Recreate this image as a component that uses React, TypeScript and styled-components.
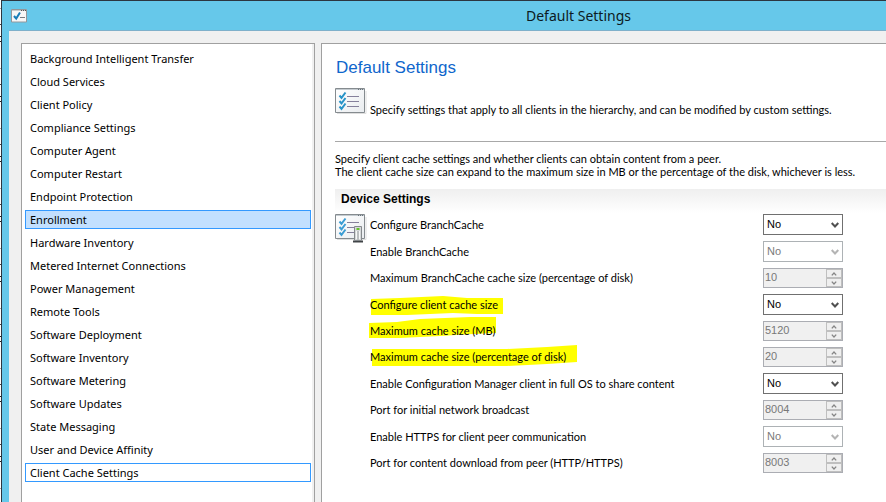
import React from "react";
import styled, { createGlobalStyle } from "styled-components";

const GlobalStyle = createGlobalStyle`
  *, *::before, *::after { box-sizing: border-box; }
  body { margin: 0; background: #fff; overflow: hidden; }
  button, input, select { font: inherit; }
`;

const Backdrop = styled.div`
  min-height: 100vh;
  display: flex;
  padding-left: 1px;
  background: repeating-linear-gradient(#fff 0 8px, #aaa 8px 9px, #fff 9px 24px, #444 24px 25px, #fff 25px 36px, #222 36px 37px, #fff 37px 41px, #222 41px 42px, #fff 42px 60px);
`;

const Window = styled.div`
  flex: 1;
  min-width: 0;
  display: flex;
  flex-direction: column;
  border: solid #2c3640;
  border-width: 1px 0 0 1px;
  padding-left: 7px;
  background: #66c8ea;
  color: #000;
`;

const TitleBar = styled.header`
  height: 30px;
  display: flex;
  align-items: center;
  padding-left: 2px;
  border-bottom: 1px solid #7fb0ca;
`;

const TitleText = styled.h1`
  flex: 1;
  margin: 0;
  padding-left: 244px;
  text-align: center;
  font: 400 14px/20px "Noto Sans", sans-serif;
  color: #0c1a22;
`;

const Content = styled.div`
  flex: 1;
  display: flex;
  gap: 6px;
  padding: 12px 0 0 12px;
  background: #f0f0f0;
`;

const CategoryList = styled.nav`
  flex: 0 0 294px;
  display: flex;
  flex-direction: column;
  gap: 4px;
  padding: 5px 1px 18px 3px;
  border: solid #a0a0a0;
  border-width: 1px 1px 0 1px;
  background: linear-gradient(#f0f0f0, #f0f0f0) right / 2px 100% no-repeat #fff;
`;

const Category = styled.button<{ $state?: "selected" | "focused" }>`
  height: 19px;
  margin-right: 2px;
  padding: 0 4px;
  border: 1px solid ${(p) => (p.$state ? "#3399ff" : "transparent")};
  background: ${(p) => (p.$state === "selected" ? "#c2e0ff" : "transparent")};
  color: #000;
  font: 400 11px/17px "Noto Sans", sans-serif;
  text-align: left;
`;

const Panel = styled.main`
  flex: 1;
  min-width: 0;
  padding: 14px 0 0 13px;
  border: solid #a0a0a0;
  border-width: 1px 0 0 1px;
  background: #fff;
  font: 400 11px/13px Lato, "Liberation Sans", sans-serif;
`;

const Heading = styled.h2`
  margin: 0 0 10px;
  padding-left: 1px;
  font-family: "Liberation Sans", Arial, sans-serif;
  font-size: 17px;
  line-height: 20px;
  font-weight: 400;
  color: #0f66cc;
`;

const Intro = styled.div`
  display: flex;
  gap: 3px;
  height: 54px;
  border-bottom: 1px solid #a8a8a8;
`;

const Paragraph = styled.p<{ $top: number }>`
  margin: ${(p) => p.$top}px 0 0;
  white-space: nowrap;
`;

const SectionTitle = styled.h3`
  height: 24px;
  margin: 11px 0 0;
  padding-left: 6px;
  background: linear-gradient(#efefef, #fff);
  font-family: "Liberation Sans", Arial, sans-serif;
  font-size: 12px;
  line-height: 21px;
`;

const Section = styled.section`
  display: flex;
  gap: 3px;
  padding: 1px 43px 24px 0;
`;

const Fields = styled.div`
  flex: 1;
  display: flex;
  flex-direction: column;
  gap: 6px;
`;

const Field = styled.div`
  display: flex;
  align-items: center;
  justify-content: space-between;
`;

const Label = styled.label`
  position: relative;
  isolation: isolate;
  line-height: 20px;
`;

const Marker = styled.svg`
  position: absolute;
  z-index: -1;
  left: 0;
  top: 0;
  width: 210px;
  height: 20px;
  overflow: visible;
  fill: #ff0;
`;

const SelectBox = styled.div`
  width: 80px;
  height: 21px;
  display: grid;
  align-items: center;
  font-family: "Liberation Sans", Arial, sans-serif;

  > * { grid-area: 1 / 1; }
  > svg { justify-self: end; margin-right: 4px; pointer-events: none; }
`;

const Select = styled.select`
  appearance: none;
  width: 100%;
  height: 21px;
  padding: 0 3px;
  border: 1px solid #707070;
  border-radius: 0;
  background: #fff;
  color: #000;

  &:disabled { border-color: #adb2b5; color: #7a7a7a; opacity: 1; }
`;

const SpinBox = styled.div`
  display: flex;
  width: 80px;
  height: 20px;
  border: 1px solid #abadb3;
  background: #f0f0f0;
  font-family: "Liberation Sans", Arial, sans-serif;
`;

const SpinInput = styled.input`
  appearance: textfield;
  flex: 1;
  min-width: 0;
  height: 16px;
  padding: 0 1px;
  border: 0;
  background: transparent;
  color: #787878;

  &::-webkit-inner-spin-button { appearance: none; }
`;

const SpinButtons = styled.div`
  display: grid;
  width: 16px;
`;

const SpinButton = styled.button`
  display: grid;
  place-items: center;
  padding: 0;
  border: 1px solid #bfbfbf;
  background: #efefef;
`;

const Chevron = ({ up, color, bold }: { up?: boolean; color: string; bold?: boolean }) => (
  <svg width={bold ? 8 : 6} height={bold ? 6 : 4} viewBox="0 0 8 6" fill="none" stroke={color} strokeWidth="2">
    <path d={up ? "M.7 5 4 1.5 7.3 5" : "M.7 1 4 4.5 7.3 1"} />
  </svg>
);

const TitleIcon = () => (
  <svg width="16" height="14" viewBox="0 0 16 14" fill="none">
    <path d="M.5.5h15v12.5H.5z" fill="#f7f7f7" stroke="#92979b" />
    <path d="M1 1.5h14" stroke="#c9cccd" />
    <path d="M10 1.5h1m1 0h1m1 0h1" stroke="#555" />
    <path d="m3 7 2.2 2.5L9 3.5" stroke="#187db8" strokeWidth="2" />
    <path d="M9 8.5h5" stroke="#777b80" />
  </svg>
);

const ChecklistIcon = ({ device }: { device?: boolean }) => (
  <svg width="32" height="30" viewBox="0 0 32 30" fill="none">
    <defs>
      <linearGradient id="sheet" x2="1" y2="1">
        <stop stopColor="#fff" />
        <stop offset="1" stopColor="#e9ecef" />
      </linearGradient>
    </defs>
    <path d="M2 25.5h29V3" stroke="#dedede" />
    <path d="M.5.5h29v24H.5z" fill="url(#sheet)" stroke="#858b8f" />
    <path d="M1 1.5h28" stroke="#c4cbd0" />
    <path d="M23 1.5h1m1 0h1m1 0h1" stroke="#69737b" />
    <g stroke={device ? "#3c9dd4" : "#2793c8"} strokeWidth="2">
      <path d="m4.5 7.5 2 2.3 4-5.3M4.5 13l2 2.3 4-5.3M4.5 18.5l2 2.3 4-5.3" />
    </g>
    <path d="M12 8.5h12M12 13.5h12M12 18.5h12" stroke="#85809b" />
    {device && (
      <>
        <path d="M18 27.5h10" stroke="#404447" strokeWidth="2" />
        <path d="M19.5 12.5h7v14h-7z" fill="#d6d9da" stroke="#85898c" />
        <path d="M21.5 17v8m3-8v8" stroke="#f7f8f8" />
        <path d="M23 17v9" stroke="#a0a4a6" />
        <path d="M21.5 15h3" stroke="#65c32b" strokeWidth="2" />
      </>
    )}
  </svg>
);

const categories = [
  "Background Intelligent Transfer", "Cloud Services", "Client Policy", "Compliance Settings",
  "Computer Agent", "Computer Restart", "Endpoint Protection", "Enrollment", "Hardware Inventory",
  "Metered Internet Connections", "Power Management", "Remote Tools", "Software Deployment",
  "Software Inventory", "Software Metering", "Software Updates", "State Messaging",
  "User and Device Affinity", "Client Cache Settings",
];

type Setting = { label: string; value: string; kind: "select" | "number"; disabled?: boolean; marker?: string };

const settings: Setting[] = [
  { label: "Configure BranchCache", value: "No", kind: "select" },
  { label: "Enable BranchCache", value: "No", kind: "select", disabled: true },
  { label: "Maximum BranchCache cache size (percentage of disk)", value: "10", kind: "number" },
  { label: "Configure client cache size", value: "No", kind: "select", marker: "1,4 30,3 73,1 97,3 133,3 133,19 107,19 83,18 37,20 1,20" },
  { label: "Maximum cache size (MB)", value: "5120", kind: "number", marker: "-1,2 27,1 50,-2 100,-4 126,-4 126,12 103,13 70,15 30,17 -1,17" },
  { label: "Maximum cache size (percentage of disk)", value: "20", kind: "number", marker: "2,2 137,2 177,0 207,-2 207,15 177,17 137,19 2,19" },
  { label: "Enable Configuration Manager client in full OS to share content", value: "No", kind: "select" },
  { label: "Port for initial network broadcast", value: "8004", kind: "number" },
  { label: "Enable HTTPS for client peer communication", value: "No", kind: "select", disabled: true },
  { label: "Port for content download from peer (HTTP/HTTPS)", value: "8003", kind: "number" },
];

const SettingRow = ({ setting, id }: { setting: Setting; id: string }) => (
  <Field>
    <Label htmlFor={id}>
      {setting.marker && <Marker aria-hidden="true"><polygon points={setting.marker} /></Marker>}
      {setting.label}
    </Label>
    {setting.kind === "select" ? (
      <SelectBox>
        <Select id={id} defaultValue={setting.value} disabled={setting.disabled}>
          <option>No</option>
          <option>Yes</option>
        </Select>
        <Chevron bold color={setting.disabled ? "#b4b4b4" : "#505050"} />
      </SelectBox>
    ) : (
      <SpinBox>
        <SpinInput id={id} type="number" defaultValue={setting.value} disabled />
        <SpinButtons>
          <SpinButton type="button" aria-label="Increase" disabled><Chevron up color="#858585" /></SpinButton>
          <SpinButton type="button" aria-label="Decrease" disabled><Chevron color="#858585" /></SpinButton>
        </SpinButtons>
      </SpinBox>
    )}
  </Field>
);

export default function App() {
  return (
    <>
      <GlobalStyle />
      <Backdrop>
        <Window>
          <TitleBar>
            <TitleIcon />
            <TitleText>Default Settings</TitleText>
          </TitleBar>
          <Content>
            <CategoryList aria-label="Settings categories">
              {categories.map((name) => (
                <Category
                  key={name}
                  type="button"
                  $state={name === "Enrollment" ? "selected" : name === "Client Cache Settings" ? "focused" : undefined}
                >
                  {name}
                </Category>
              ))}
            </CategoryList>
            <Panel>
              <Heading>Default Settings</Heading>
              <Intro>
                <ChecklistIcon />
                <Paragraph $top={15}>Specify settings that apply to all clients in the hierarchy, and can be modified by custom settings.</Paragraph>
              </Intro>
              <Paragraph $top={10}>
                Specify client cache settings and whether clients can obtain content from a peer.<br />
                The client cache size can expand to the maximum size in MB or the percentage of the disk, whichever is less.
              </Paragraph>
              <SectionTitle>Device Settings</SectionTitle>
              <Section>
                <ChecklistIcon device />
                <Fields>
                  {settings.map((s, i) => <SettingRow key={s.label} setting={s} id={`setting-${i}`} />)}
                </Fields>
              </Section>
            </Panel>
          </Content>
        </Window>
      </Backdrop>
    </>
  );
}
